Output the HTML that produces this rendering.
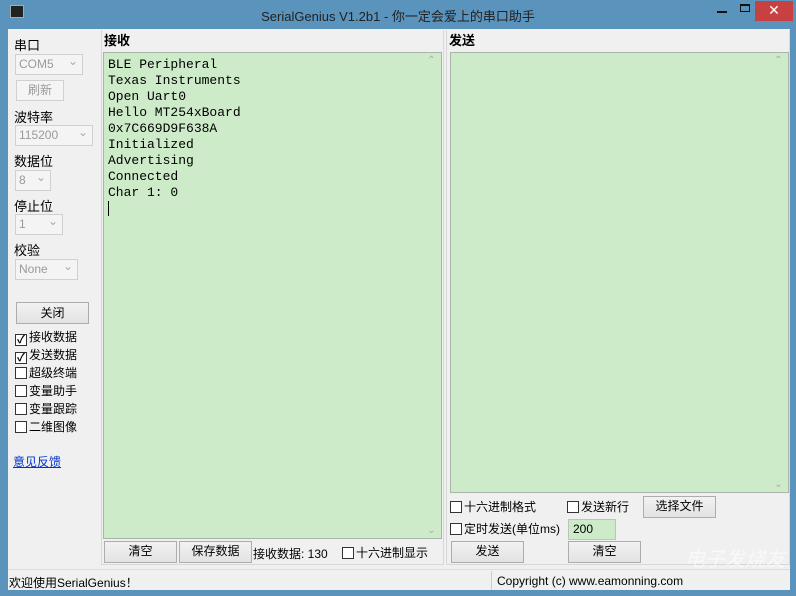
<!DOCTYPE html>
<html><head><meta charset="utf-8"><style>
*{margin:0;padding:0;box-sizing:border-box}
body{width:796px;height:596px;background:#5a93bb;position:relative;overflow:hidden;font-family:"Liberation Sans","Noto Sans CJK SC",sans-serif;font-size:12px;color:#000}
.a{position:absolute}
.client{left:8px;top:29px;width:782px;height:561px;background:#f0f0f0}
.btn{position:absolute;background:linear-gradient(#f2f2f2,#e2e2e2);border:1px solid #adadad;text-align:center;line-height:19px;font-size:12px}
.dis{color:#9a9a9a;border-color:#d0d0d0;background:#f4f4f4}
.combo{position:absolute;border:1px solid #d0d0d0;background:#f4f4f4;color:#9a9a9a;padding-left:3px;line-height:19px;font-size:12px}
.combo:after{content:"⌄";position:absolute;right:4px;top:-3px;color:#aaa}
.cb{position:absolute;font-size:12px;line-height:16px;white-space:nowrap}
.cb i{display:inline-block;width:12px;height:12px;border:1px solid #333;background:#fff;vertical-align:-2px;margin-right:2px;font-style:normal;font-size:11px;line-height:10px;text-align:center;font-weight:bold}
.ta{position:absolute;background:#cdebc9;border:1px solid #a8b5a8}
.mono{font-family:"Liberation Mono",monospace;font-size:13px;line-height:16px;white-space:pre}
.sb{position:absolute;top:0;right:0;width:17px;bottom:0;background:#cdebc9;color:#aaa;font-size:10px;text-align:center}
</style></head><body>
<div class="a" style="left:10px;top:5px;width:14px;height:13px;background:#222;border:1px solid #aaa"></div>
<div class="a" style="left:0;top:6px;width:796px;text-align:center;font-size:13px;color:#222">SerialGenius V1.2b1 - 你一定会爱上的串口助手</div>
<div class="a" style="left:717px;top:11px;width:10px;height:2px;background:#111"></div>
<div class="a" style="left:740px;top:4px;width:10px;height:8px;border:1px solid #111;border-top-width:2px"></div>
<div class="a" style="left:755px;top:1px;width:38px;height:20px;background:#c74143;color:#fff;text-align:center;font-size:14px;line-height:19px">✕</div>
<div class="a client"></div>

<div class="a" style="left:14px;top:35px;font-size:13px">串口</div>
<div class="combo" style="left:15px;top:54px;width:68px">COM5</div>
<div class="btn dis" style="left:16px;top:80px;width:48px">刷新</div>
<div class="a" style="left:14px;top:107px;font-size:13px">波特率</div>
<div class="combo" style="left:15px;top:125px;width:78px">115200</div>
<div class="a" style="left:14px;top:151px;font-size:13px">数据位</div>
<div class="combo" style="left:15px;top:170px;width:36px">8</div>
<div class="a" style="left:14px;top:196px;font-size:13px">停止位</div>
<div class="combo" style="left:15px;top:214px;width:48px">1</div>
<div class="a" style="left:14px;top:240px;font-size:13px">校验</div>
<div class="combo" style="left:15px;top:259px;width:63px">None</div>
<div class="btn" style="left:16px;top:302px;width:73px;line-height:20px">关闭</div>
<div class="cb" style="left:15px;top:329px"><i>✓</i>接收数据</div>
<div class="cb" style="left:15px;top:347px"><i>✓</i>发送数据</div>
<div class="cb" style="left:15px;top:365px"><i></i>超级终端</div>
<div class="cb" style="left:15px;top:383px"><i></i>变量助手</div>
<div class="cb" style="left:15px;top:401px"><i></i>变量跟踪</div>
<div class="cb" style="left:15px;top:419px"><i></i>二维图像</div>
<div class="a" style="left:13px;top:453px;color:#0033cc;text-decoration:underline">意见反馈</div>

<div class="a" style="left:101px;top:30px;width:343px;height:535px;border:1px solid #d8d8d8;border-top:none"></div>
<div class="a" style="left:104px;top:30px;font-weight:bold;font-size:13px">接收</div>
<div class="ta" style="left:103px;top:52px;width:339px;height:487px"><div class="mono" style="padding:4px 0 0 4px">BLE Peripheral
Texas Instruments
Open Uart0
Hello MT254xBoard
0x7C669D9F638A
Initialized
Advertising
Connected
Char 1: 0
<span style="border-left:1px solid #000"> </span></div>
<div class="sb" style="right:1px;top:2px">⌃<div style="position:absolute;bottom:2px;width:17px">⌄</div></div></div>
<div class="btn" style="left:104px;top:541px;width:73px;height:22px">清空</div>
<div class="btn" style="left:179px;top:541px;width:73px;height:22px">保存数据</div>
<div class="a" style="left:253px;top:545px">接收数据: 130</div>
<div class="cb" style="left:342px;top:545px"><i></i>十六进制显示</div>

<div class="a" style="left:446px;top:30px;width:344px;height:535px;border:1px solid #d8d8d8;border-top:none"></div>
<div class="a" style="left:449px;top:30px;font-weight:bold;font-size:13px">发送</div>
<div class="ta" style="left:450px;top:52px;width:339px;height:441px"><div class="sb" style="right:1px;top:2px">⌃<div style="position:absolute;bottom:2px;width:17px">⌄</div></div></div>
<div class="cb" style="left:450px;top:499px"><i></i>十六进制格式</div>
<div class="cb" style="left:567px;top:499px"><i></i>发送新行</div>
<div class="btn" style="left:643px;top:496px;width:73px;height:22px">选择文件</div>
<div class="cb" style="left:450px;top:521px"><i></i>定时发送(单位ms)</div>
<div class="a" style="left:568px;top:519px;width:48px;height:21px;background:#cdebc9;border:1px solid #b8c8b8;padding-left:4px;line-height:19px">200</div>
<div class="btn" style="left:451px;top:541px;width:73px;height:22px">发送</div>
<div class="btn" style="left:568px;top:541px;width:73px;height:22px">清空</div>

<div class="a" style="left:8px;top:569px;width:782px;height:1px;background:#dcdcdc"></div>
<div class="a" style="left:9px;top:574px;font-size:12px">欢迎使用SerialGenius！</div>
<div class="a" style="left:491px;top:571px;width:1px;height:19px;background:#ccc"></div>
<div class="a" style="left:497px;top:574px;font-size:12px">Copyright (c) www.eamonning.com</div>
<div class="a" style="left:685px;top:543px;color:#fff;font-size:20px;font-style:italic;opacity:.6">电子发烧友</div>
</body></html>
